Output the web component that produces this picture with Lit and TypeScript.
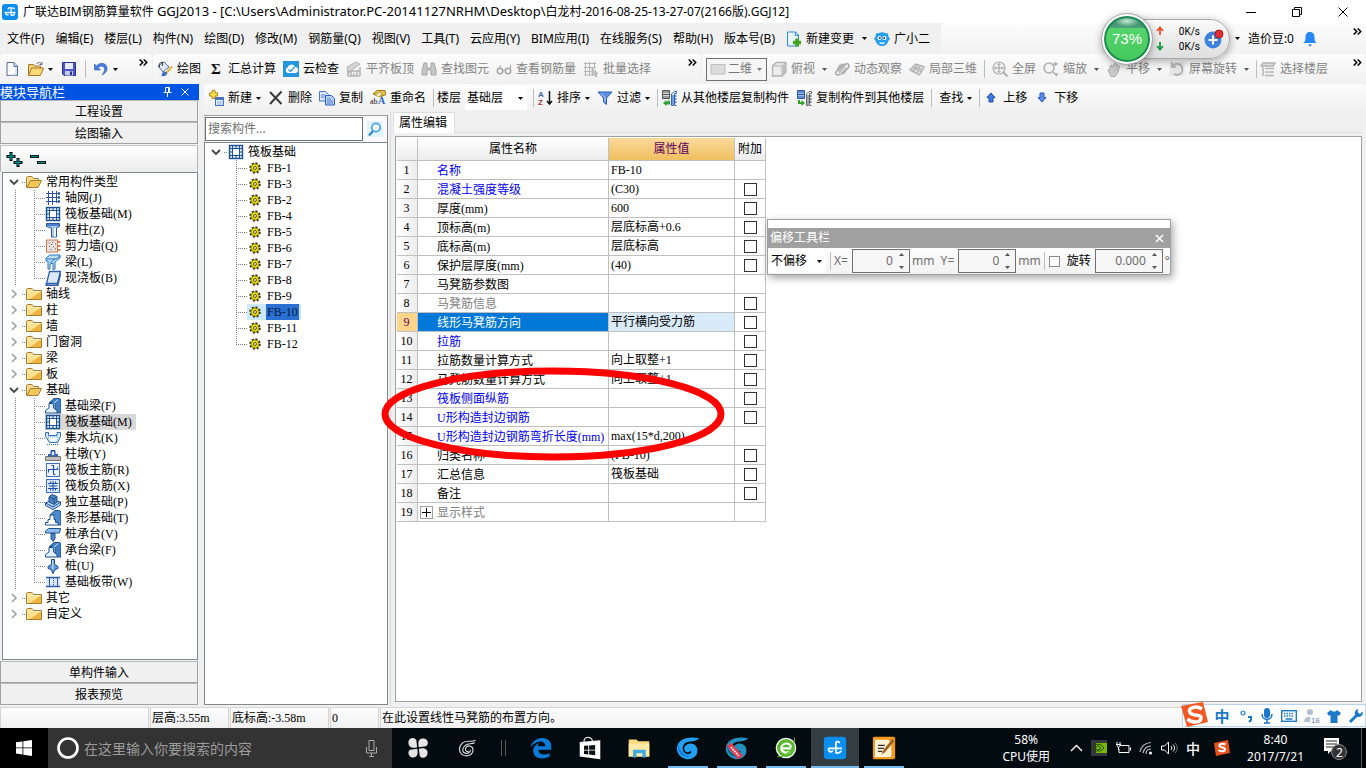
import { LitElement, html, css, svg, nothing } from "lit";
import { customElement } from "lit/decorators.js";
import { classMap } from "lit/directives/class-map.js";

const g = "#b4b4b4";

const icons: Record<string, unknown> = {
  app: svg`<rect x="0" y="0" width="16" height="16" rx="3" fill="#0d8df0"/><path d="M9 11.500V5.500a1.700 1.700 0 0 1 3.400 0M2.500 8.500h11M3.500 8.500c0 2 1.500 3 3 2M9 11.500c2 0 3.500-.5 3.500-2M9 4c-1.500-1-3 0-3 1.500" fill="none" stroke="#fff" stroke-width="1.300"/>`,
  file: svg`<path d="M3 1.500h7l3.500 3.500v9.500h-10.500z" fill="#fff" stroke="#53699a"/><path d="M10 1.500v4h3.500" fill="#cfdcf2" stroke="#53699a"/><path d="M12 6.500v7.500H5" fill="none" stroke="#b9c6e0"/>`,
  open: svg`<path d="M.5 14V3.500h5l1 1.500h6v2" fill="#f4d27a" stroke="#a8782a"/><path d="M.5 14.500l3-7.500h12l-3 7.500z" fill="#fbd976" stroke="#a8782a"/><path d="M8.500 3c2-2.500 4.500-1.500 5.500.500m0 0V1m0 2.500h-2.500" fill="none" stroke="#668" />`,
  save: svg`<path d="M1.500 1.500h13v13h-11.500l-1.500-1.500z" fill="#4b57c8" stroke="#2b3590"/><rect x="4" y="2" width="8" height="6" fill="#e8ecff"/><rect x="4" y="10" width="8" height="4.500" fill="#c7c9de"/><rect x="9" y="10.500" width="2" height="3.500" fill="#2b3590"/>`,
  undo: svg`<path d="M1.500 3v6h6L5.200 6.800C8 4 11.500 5 11.500 8c0 2.500-1 4-2.500 6 4-2 5.500-4.500 5-7.500C13 1.500 6.500 1 3.500 5z" fill="#4c7fdc" stroke="#2b58b0" stroke-width=".6"/>`,
  paint: svg`<path d="M1 5l6-4 5 5-6 5z" fill="#dfe7f7" stroke="#54699a"/><path d="M2.500 6V2.500l3-1.500v4" fill="none" stroke="#444"/><path d="M15 5.500l-6 7" stroke="#e5b43a" stroke-width="2"/><path d="M5 12c2-1 3-2 5 0 0 3-3 3.500-6 3 1-.5 1-1.500 1-3z" fill="#3c6fc8"/>`,
  sigma: svg`<text x="3" y="13" font-family="Liberation Serif" font-weight="bold" font-size="15" fill="#111">Σ</text>`,
  cloud: svg`<rect width="16" height="16" fill="#2496e0"/><path d="M4.500 12a3 3 0 0 1 0-5.500A4 4 0 0 1 12 6a3 3 0 0 1 0 6z" fill="#fff"/><path d="M5.500 8.500l2 2 4-4.500" fill="none" stroke="#2496e0" stroke-width="1.300"/>`,
  slab: svg`<path d="M1 6l9-5 4 2-8 6v2l-4 1z" fill="#d4d4d4" stroke="${g}"/><path d="M2 15V10h12V6M5 15v-3M8 15v-3M11 15v-5M14 15V8M2 15h12" fill="none" stroke="${g}" stroke-width="1.500"/>`,
  find: svg`<path d="M3 2h3v5h4V2h3l2 7v5h-5V9H6v5H1V9z" fill="#c6c6c6" stroke="#a6a6a6"/>`,
  glasses: svg`<circle cx="4" cy="10" r="2.700" fill="none" stroke="#a6a6a6" stroke-width="1.500"/><circle cx="12" cy="10" r="2.700" fill="none" stroke="#a6a6a6" stroke-width="1.500"/><path d="M6.500 9.500h3M1.500 9L5 4M14.500 9V3.500" stroke="#a6a6a6" fill="none"/>`,
  batch: svg`<path d="M1 2.500h12M1 6.500h12M1 10.500h7M1 14h7M2.500 1v13M6.500 1v13M11.500 1v6" stroke="${g}" fill="none"/><path d="M9 7v8l2-2 1.500 3 1.500-.5-1.500-3H15z" fill="#c8c8c8" stroke="#a0a0a0" stroke-width=".7"/>`,
  rect: svg`<rect x="1" y="3.500" width="14" height="9.500" fill="#dcdcdc" stroke="#c0c0c0"/>`,
  cube: svg`<path d="M1.500 5l4-3.500h9.500v9.500l-4 4h-9.500z" fill="#ececec" stroke="#b2b2b2" stroke-width="1.300"/><path d="M1.500 5h9.500v10M11 5l4-3.500" fill="none" stroke="#b2b2b2"/><path d="M11.500 5.500l3-3v8.500l-3 3z" fill="#bdbdbd"/>`,
  orbit: svg`<ellipse cx="8" cy="8" rx="4.500" ry="5.500" fill="#bdbdbd"/><ellipse cx="8" cy="8.500" rx="8" ry="3" transform="rotate(-38 8 8)" fill="none" stroke="#a9a9a9" stroke-width="1.400"/><path d="M6 13l7-9" stroke="#eee"/>`,
  part3d: svg`<path d="M.8 9l6-6 8.500 3-5 8z" fill="#e0e0e0" stroke="#adadad" stroke-width="1.200"/><path d="M4 6l8.500 5M8 4L4.500 11.500M11 5l-3.500 8M3 10l4-4 6 3" fill="none" stroke="#adadad"/>`,
  full: svg`<circle cx="7" cy="7" r="6" fill="#f4f4f4" stroke="#b0b0b0" stroke-width="1.200"/><path d="M7 2.500v9M2.500 7h9M5.500 4L7 2.500 8.500 4M5.500 10L7 11.500 8.500 10M4 5.500L2.500 7 4 8.500M10 5.500L11.500 7 10 8.500" fill="none" stroke="#a0a0a0"/><path d="M11.500 11.500l4 4" stroke="#b0b0b0" stroke-width="2"/>`,
  zoom: svg`<circle cx="6" cy="7" r="5" fill="#f4f4f4" stroke="#b0b0b0" stroke-width="1.500"/><path d="M10 11l4 4M10 3h5M12.500 1v4M11 13h4" stroke="#b0b0b0" stroke-width="1.500"/>`,
  hand: svg`<path d="M2 9l2-1V5l2-1v2l3-4 1.500 1.500 3 2-1.500 6-3 4H5z" fill="#c9c9c9" stroke="#ababab"/>`,
  rotate: svg`<rect x=".5" y="1" width="15" height="14" fill="#e6e6e6"/><path d="M3 6a5.500 5.500 0 1 1 2 7M3 1.500V6h4" fill="none" stroke="#aaa" stroke-width="1.600"/>`,
  floors: svg`<path d="M3 2h12l-2 3H1zM5 7.500h9M5 11h9M5 14.500h9M3 6v9" fill="#ddd" stroke="${g}" stroke-width="1.500"/>`,
  create: svg`<path d="M4 .5h3v2.500h2.500v3H7v2.500H4V6H1.500V3H4z" fill="#ffe14a" stroke="#b48a12"/><rect x="7.500" y="7.500" width="8" height="8" fill="#e5eefb" stroke="#4874bd"/><path d="M8 9h7" stroke="#4874bd" stroke-width="2"/><path d="M9 12h5.500M9 14h5.500" stroke="#8faee0"/>`,
  remove: svg`<path d="M2 2l11.500 12M13.500 1.500L2 14" stroke="#3a3a3a" stroke-width="2" fill="none"/>`,
  copy: svg`<path d="M.5 1.500h6l3 3V11H.5z" fill="#d7e5fb" stroke="#4b76c4"/><path d="M6.500 5.500h6l3 3V15h-9z" fill="#b5cef5" stroke="#2e5fb5"/><path d="M8 9h4M8 11h6M8 13h6M2 5h4M2 7h4" stroke="#5c83c9"/>`,
  rename: svg`<path d="M3 4l4-3.500h8l1 4-5 2z" fill="#e5bf46" stroke="#9a761f"/><path d="M5 5l5-3 2 2-3 3z" fill="#fff0c0" stroke="#9a761f" stroke-width=".6"/><text x="0" y="14" font-family="Liberation Serif" font-size="8" fill="#111">ab</text><text x="8" y="14" font-family="Liberation Serif" font-weight="bold" font-size="10" fill="#2d62bd">A</text>`,
  sort: svg`<text x="1" y="7" font-family="Liberation Sans" font-weight="bold" font-size="8" fill="#3c68ae">A</text><text x="1" y="15" font-family="Liberation Sans" font-weight="bold" font-size="8" fill="#a9393d">Z</text><path d="M12.500 1v13M10 11l2.500 3 2.500-3" fill="none" stroke="#111" stroke-width="1.500"/>`,
  filter: svg`<path d="M1 2h14l-5.500 6v6.500L6.500 12V8z" fill="#5b8fe8" stroke="#2c5cb5"/><path d="M4 3.500l4 4v4" stroke="#c4dafa" fill="none"/>`,
  copyFrom: svg`<path d="M1.500.500h7v8h-7z" fill="#ddd" stroke="#555"/><path d="M2 2h6M2 4.500h6M2 7h6" stroke="#555"/><path d="M10.500 4l3-2.500h2v2h-2v12h2M10.500 4v11.500h2" stroke="#2f66bd" fill="none"/><path d="M11 5h2v10h-2z" fill="#6f9ee6"/><path d="M13.500 6h2M13.500 9h2M13.500 12h2" stroke="#2f66bd" stroke-width="1.500"/><path d="M9 11v3.500H5.500V16L2 13l3.500-3v1.500H7V10z" fill="#2fa22f"/>`,
  copyTo: svg`<path d="M1.500.500h7v8h-7z" fill="#9dbcf0" stroke="#2c5aa8"/><path d="M2 2h6M2 4.500h6M2 7h6" stroke="#2c5aa8"/><path d="M10.500 4l3-2.500h2v2h-2v12h2M10.500 4v11.500h2" stroke="#666" fill="none"/><path d="M11 5h2v10h-2z" fill="#a0a8b4"/><path d="M13.500 6h2M13.500 9h2M13.500 12h2" stroke="#555" stroke-width="1.500"/><path d="M2 10v4h3.500v2L9 13 5.500 10v2H4v-2z" fill="#2fa22f"/>`,
  up: svg`<path d="M8 3l4 4.500H10v4.500H6V7.500H4z" fill="#3f79e6" stroke="#1e4ca8"/>`,
  down: svg`<path d="M8 12L4 7.500h2V3h4v4.500h2z" fill="#5d8cee" stroke="#2b59b8"/>`,
  change: svg`<path d="M1.500 1h8l3 3v11h-11z" fill="#eaf5fd" stroke="#2a8fd0"/><path d="M9.500 1v3.500h3" fill="none" stroke="#2a8fd0"/><path d="M11 7.500v8M7 11.500h8" stroke="#44a51c" stroke-width="3.500"/>`,
  owl: svg`<path d="M2 2.500l3-.5c2-1 4-1 6 0l3 .5.500 3.500c2 1 1.500 3 0 3.500-1 4-3.500 5.500-6.500 5.500s-5.500-1.500-6.500-5.500c-1.500-.5-2-2.500 0-3.500z" fill="#269ee8"/><circle cx="5.500" cy="7" r="2" fill="#fff"/><circle cx="10.500" cy="7" r="2" fill="#fff"/><circle cx="5.800" cy="7" r=".9" fill="#135"/><circle cx="10.200" cy="7" r=".9" fill="#135"/><path d="M5.500 11.500c1.500 1 3.500 1 5 0" stroke="#fff" stroke-width="1.300" fill="none"/>`,
  bell: svg`<path d="M8 1c3.500 0 4.500 2.500 4.500 5.500 0 3 .5 4 2 5.500h-13c1.500-1.500 2-2.500 2-5.500C3.500 3.500 4.500 1 8 1z" fill="#2489f4"/><path d="M6 13.500h4L8 15.500z" fill="#1868c8"/>`,
  folder: svg`<path d="M.5 13.500V3.500l1-1h4.500l1.500 2h8v9z" fill="#fadf8e" stroke="#a77c35"/><path d="M15 5.500v7.500H4z" fill="#eeb53e"/><path d="M1.500 5.500h13" stroke="#fff3c4"/>`,
  folderOpen: svg`<path d="M.5 13.500V3.500l1-1h4.500l1.500 2h5v2" fill="#fadf8e" stroke="#a77c35"/><path d="M1 13.500l3.500-7h11l-3.500 7z" fill="#f5c858" stroke="#a77c35"/>`,
  axis: svg`<path d="M3.500 1v14M7.500 1v14M11.500 1v12M1 3.500h12M1 7.500h12M1 11.500h12" stroke="#2b56a8"/><path d="M13 3.500h2M13 7.500h2M13 11.500h2" stroke="#2b56a8" stroke-width="2.500"/>`,
  raft: svg`<rect x="1.500" y="1.500" width="13" height="13" fill="#e2effc" stroke="#1c4f8f" stroke-width="1.400"/><rect x="4.500" y="4.500" width="7" height="7" fill="#fff" stroke="#1c4f8f"/><path d="M4.500 2v2M8 2v2M11.500 2v2M4.500 12v2M8 12v2M11.500 12v2M2 4.500h2M2 8h2M2 11.500h2M12 4.500h2M12 8h2M12 11.500h2" stroke="#1c4f8f"/>`,
  column: svg`<path d="M1.500 1.500h13v3l-3 1.500v9h-5V6l-5-1.500z" fill="#a9c9f4" stroke="#2a559c"/><path d="M2 2h12v2H2z" fill="#4a7fd0"/><path d="M10 6v9" stroke="#fff" stroke-width="1.500"/>`,
  wall: svg`<rect x="1.500" y="2" width="11" height="12" fill="#e9e4e2" stroke="#cc7a4a"/><path d="M3.500 5h1M7 4.500h1M10 6h1M4 8.500h1M8 9h1M5.500 11.500h1M10 11h1M6 6.500h1" stroke="#555" stroke-width="1.200"/><path d="M13 4h2.500M13 8h2.500M13 12h2.500" stroke="#cc5c20" stroke-width="1.500"/>`,
  beam: svg`<path d="M1 4l4-3h10v3l-5 4v7l-2 1V9l-3 1v5H3V7H1z" fill="#b9e0f8" stroke="#2f74b8"/><path d="M2 5h9l4-3M5 9l5-4" stroke="#2f74b8" fill="none"/>`,
  castSlab: svg`<path d="M4.500 1.500h11l-3 12H1.500z" fill="#dbe9fb" stroke="#2d60ae" stroke-width="1.300"/><path d="M1.500 13v2.500H12.500l3-12" fill="none" stroke="#2d60ae" stroke-width="1.800"/>`,
  fbeam: svg`<path d="M4 5l5-4.500h5.500L16 2v13h-4l-2-3V5z" fill="#3f7fc4" stroke="#1f4f8c"/><path d="M4 5.500h4.500V10L12 12.500V15H.5v-2.500L4 10z" fill="#e3f0fd" stroke="#1f4f8c"/><path d="M8.500 5.500L13 1.500" stroke="#cfe5fa"/>`,
  pit: svg`<path d="M.5 2.500h3v3h8.500v-3h3.500v4l-3 6h-8l-4-6z" fill="#d5e8fb" stroke="#2f6fb8"/><path d="M3 7h10v1l-2 4H5z" fill="#fff" stroke="#72aee0" stroke-dasharray="1 1"/><path d="M2 14.500h12" stroke="#2f6fb8" stroke-dasharray="1 1"/>`,
  pier: svg`<path d="M.5 10.500h15v4H.5z" fill="#bdbdbd" stroke="#777"/><path d="M3.500 10V8.500h2.500V4.500h4v4h2.500V10z" fill="#5c92dc" stroke="#284f94"/><path d="M7 6h2v3H7z" fill="#e5f0ff"/>`,
  mainBar: svg`<rect x="1.500" y="1.500" width="13" height="13" fill="#f2f7ff" stroke="#3c6fc0"/><path d="M3.500 10.500v-3h9v-2M8.500 12.500v-9h-2M8.500 12.500h2" fill="none" stroke="#2350a8" stroke-width="1.200"/>`,
  negBar: svg`<rect x="1.500" y="1.500" width="13" height="13" fill="#dce8fa" stroke="#3c6fc0"/><path d="M3 5.500h10M3 10.500h10M5.500 3.500v2M10.500 3.500v2M8 3v10M4 8h8M5.500 10.500v2M10.500 10.500v2" fill="none" stroke="#2350a8"/>`,
  iso: svg`<path d="M.5 9l5.500-3 9.500 2v3l-7.500 4.500-7.500-4z" fill="#b4d5f5" stroke="#1f4f8c"/><path d="M4 3l3-2.500 5 2v5.500l-3 2.500-5-2.500z" fill="#4e86c4" stroke="#1f4f8c"/><path d="M4 3l5 2v5M9 5l3-2.500M.5 9l7.500 4 7.500-5" fill="none" stroke="#1f4f8c"/>`,
  strip: svg`<path d="M5 5l5-4.500h4.500L16 2v13h-3" fill="#4d8bd0" stroke="#1f4f8c"/><path d="M.5 15v-2.500H3V9.500h2V5h4v4.500h1.500v3H13V15z" fill="#fff" stroke="#1f4f8c"/>`,
  cap: svg`<path d="M.5 5l3-2.500h12l-1 4.500H.5z" fill="#8fbdee" stroke="#1f4f8c"/><path d="M6 7.500h4v5L8 15.500 6 12.500z" fill="#4e86c4" stroke="#1f4f8c"/>`,
  pile: svg`<path d="M6.500 1.500h3v5l3.500 2v2l-3 1L8 15.500 6 11.500l-3-1v-2l3.500-2z" fill="#5d9bde" stroke="#1c4a86"/><path d="M7.800 2v9" stroke="#dfefff"/>`,
  band: svg`<path d="M1 4h14v8H1z" fill="#dbe9fb"/><path d="M1 3.500h14M1 12.500h14" stroke="#2c5cab" stroke-width="1.400"/><path d="M4.500 4v8M12.500 4v8" stroke="#2c5cab"/><path d="M8.500 4v8" stroke="#2c5cab" stroke-dasharray="1 1"/>`,
  gear: svg`<circle cx="8" cy="8" r="6.500" fill="none" stroke="#3b3400" stroke-width="2.500" stroke-dasharray="2.550 2.550"/><circle cx="8" cy="8" r="5.500" fill="#f3e400" stroke="#3b3400"/><circle cx="8" cy="8" r="2" fill="#fffbd0" stroke="#3b3400" stroke-width="1.200"/>`,
  search: svg`<rect width="16" height="16" fill="#e3f3fd"/><circle cx="9" cy="6.500" r="4.200" fill="#f6fcff" stroke="#45a5e5" stroke-width="1.800"/><path d="M6 10l-4 4.500" stroke="#2d86cc" stroke-width="2.200"/>`,
};

const icon = (name: string, size = 16) =>
  html`<svg class="ic" width=${size} height=${size} viewBox="0 0 16 16" aria-hidden="true">${icons[name]}</svg>`;

const caret = () =>
  html`<svg class="caret" width="5" height="3" viewBox="0 0 5 3" aria-hidden="true"><path d="M0 0h5L2.500 3z" fill="currentColor" /></svg>`;

const more = () =>
  html`<button class="more" aria-label="更多"><svg width="9" height="7" viewBox="0 0 9 7"><path d="M.7.500l3 3-3 3M4.700.500l3 3-3 3" fill="none" stroke="#000" stroke-width="1.500" /></svg></button>`;

interface Tool { icon: string; label: string; menu?: boolean; }

const tool = (t: Tool, off = false) =>
  html`<button class=${classMap({ tool: true, off })}>${icon(t.icon)}<span>${t.label}</span>${t.menu ? caret() : nothing}</button>`;

const menus = ["文件(F)", "编辑(E)", "楼层(L)", "构件(N)", "绘图(D)", "修改(M)", "钢筋量(Q)", "视图(V)", "工具(T)", "云应用(Y)", "BIM应用(I)", "在线服务(S)", "帮助(H)", "版本号(B)"];

interface Branch { label: string; open?: boolean; items?: [string, string][]; }

const branches: Branch[] = [
  { label: "常用构件类型", open: true, items: [["axis", "轴网(J)"], ["raft", "筏板基础(M)"], ["column", "框柱(Z)"], ["wall", "剪力墙(Q)"], ["beam", "梁(L)"], ["castSlab", "现浇板(B)"]] },
  { label: "轴线" }, { label: "柱" }, { label: "墙" }, { label: "门窗洞" }, { label: "梁" }, { label: "板" },
  { label: "基础", open: true, items: [["fbeam", "基础梁(F)"], ["raft", "筏板基础(M)"], ["pit", "集水坑(K)"], ["pier", "柱墩(Y)"], ["mainBar", "筏板主筋(R)"], ["negBar", "筏板负筋(X)"], ["iso", "独立基础(P)"], ["strip", "条形基础(T)"], ["cap", "桩承台(V)"], ["fbeam", "承台梁(F)"], ["pile", "桩(U)"], ["band", "基础板带(W)"]] },
  { label: "其它" }, { label: "自定义" },
];

const members = ["FB-1", "FB-3", "FB-2", "FB-4", "FB-5", "FB-6", "FB-7", "FB-8", "FB-9", "FB-10", "FB-11", "FB-12"];

interface Prop { name: string; value?: string; tone?: string; box?: boolean; }

const props: Prop[] = [
  { name: "名称", value: "FB-10", tone: "key" },
  { name: "混凝土强度等级", value: "(C30)", tone: "key", box: true },
  { name: "厚度(mm)", value: "600", box: true },
  { name: "顶标高(m)", value: "层底标高+0.6", box: true },
  { name: "底标高(m)", value: "层底标高", box: true },
  { name: "保护层厚度(mm)", value: "(40)", box: true },
  { name: "马凳筋参数图" },
  { name: "马凳筋信息", tone: "dim", box: true },
  { name: "线形马凳筋方向", value: "平行横向受力筋", tone: "sel", box: true },
  { name: "拉筋", tone: "key", box: true },
  { name: "拉筋数量计算方式", value: "向上取整+1", box: true },
  { name: "马凳筋数量计算方式", value: "向上取整+1", box: true },
  { name: "筏板侧面纵筋", tone: "key", box: true },
  { name: "U形构造封边钢筋", tone: "key", box: true },
  { name: "U形构造封边钢筋弯折长度(mm)", value: "max(15*d,200)", tone: "key" },
  { name: "归类名称", value: "(FB-10)", box: true },
  { name: "汇总信息", value: "筏板基础", box: true },
  { name: "备注", box: true },
  { name: "显示样式", tone: "dim tree" },
];

const chevron = (open: boolean) => html`<svg class="chev" width="10" height="10" viewBox="0 0 10 10" aria-hidden="true">
  ${open ? svg`<path d="M1 3l4 4 4-4" fill="none" stroke="#444" stroke-width="1.800"/>` : svg`<path d="M3 1l4 4-4 4" fill="none" stroke="#a0a0a0" stroke-width="1.600"/>`}</svg>`;

const swirl = (color: string, shade: string) => svg`<path d="M27 2c-3 1-6-1-11 0C7 2 1 8 1 15c0 6 5 11 11 12 7 1 13-3 13-10 0-5-4-9-10-8-5 1-7 6-4 9 2 2 5 1 6-1 2 3-1 5-4 4-6-1-7-9-2-13C15 5 24 8 27 2z" fill=${color}/><path d="M3 10c-2 10 6 16 14 14-8-1-13-6-14-14z" fill=${shade}/>`;

const apps: { name: string; state?: string; art: unknown }[] = [
  { name: "启动器", art: svg`<g fill="#e6e6e6"><path d="M13 13C6 15 2 12 3 6c1-4 7-5 9-1z"/><path d="M15 13C13 6 16 2 21 3c5 1 6 7 2 9z"/><path d="M15 15c7-2 11 1 10 6-1 5-7 6-9 2z"/><path d="M13 15c2 7-1 11-6 10-4-1-6-7-2-9z"/></g>` },
  { name: "搜索助手", art: svg`<path d="M24 5c-5 3-10-1-15 3-5 4-5 11 0 14 5 3 12 0 12-6 0-4-5-6-8-3-2 3 0 6 3 5M23 8c-4 2-8 0-11 3-4 3-4 8 0 9 3 1 6-1 6-4" fill="none" stroke="#ddd" stroke-width="1.300"/>` },
  { name: "divider", art: nothing },
  { name: "Edge", art: svg`<path d="M2 13C5-1 26-1 26 12v4H11c0 6 8 7 13 4v4C17 28 4 27 5 16c.5-4 4-7 8-8-2 1-3 3-3 4h9c0-8-11-7-17 1z" fill="#0a7bd8"/>` },
  { name: "应用商店", art: svg`<path d="M2 7l24-2v22l-24-3z" fill="#fff"/><path d="M7 7c0-7 8-7 10-1" fill="none" stroke="#ddd" stroke-width="1.500"/><path d="M7 11.500l5-.5v5H7zM13 11l7-.5V16h-7zM7 17h5v4.500L7 21zM13 17h7v5.500l-7-.8z" fill="#0a1014"/>` },
  { name: "文件资源管理器", art: svg`<path d="M2 4h9l2 2h13v18H2z" fill="#fbd97b"/><path d="M2 9h24v15H2z" fill="#fde9a6"/><path d="M7 25v-9h15v9h-4v-5h-7v5z" fill="#3fa9e6"/>` },
  { name: "广联达", state: "run", art: swirl("#1fa0f0", "#1678d4") },
  { name: "广联达服务", state: "run", art: svg`${swirl("#2391c0", "#135f8a")}<path d="M2 12l5-4 14 15-6 4z" fill="#e33a4a"/><path d="M7 13l9 10" stroke="#fff" stroke-width="2" stroke-dasharray="2 1"/>` },
  { name: "浏览器", state: "run", art: svg`<circle cx="14" cy="14" r="12" fill="#fff"/><circle cx="14" cy="14" r="10.500" fill="#57b82e"/><path d="M8 14.500h12c0-8-11-7-11.500-.5 0 6 7 6.500 10 3.500" fill="none" stroke="#fff" stroke-width="2.500"/><path d="M4 24c9 2 20-9 20-22" fill="none" stroke="#57b82e" stroke-width="1.200"/>` },
  { name: "钢筋算量", state: "run on", art: svg`<rect x="1" y="1" width="26" height="26" rx="4" fill="#0a8ff0"/><path d="M15 20V8.500c0-2.500 4-2.500 4 0M6.500 14.500H22M6.500 14.500c-.5 4 3 5 5 2.500M15 20c3 0 6-1 6-3" fill="none" stroke="#fff" stroke-width="2"/>` },
  { name: "文档编辑", state: "run", art: svg`<rect x="1" y="1" width="26" height="26" rx="2" fill="#f39a1c"/><path d="M4 5h15l3 3v16H4z" fill="#fdf3d4" stroke="#fff"/><path d="M7 11h8M7 14.500h7M7 18h5" stroke="#333" stroke-width="1.300"/><path d="M24 3L13 17l-2 5 4-3L26 6z" fill="#a55b1a"/>` },
];

@customElement("app-root")
export class AppRoot extends LitElement {
  static styles = css`
    :host {
      display: flex; flex-direction: column; position: relative; min-height: 100vh; overflow: hidden;
      background: #f0f0f0; color: #000;
      font: 12px/16px "Noto Sans", "Noto Sans CJK SC", sans-serif;
    }
    * { box-sizing: border-box; }
    button, input, select { font: inherit; color: inherit; margin: 0; padding: 0; border: 0; background: none; border-radius: 0; outline: 0; white-space: nowrap; }
    ul { list-style: none; margin: 0; padding: 0; }
    svg { display: block; flex: none; }
    .titlebar { display: flex; align-items: center; height: 23px; background: #fff; padding-left: 2px; gap: 5px; }
    .titlebar h1 { flex: 1; margin: 0; font-size: 12px; font-weight: 400; white-space: nowrap; }
    .path { font-size: 13px; }
    .titlebar button { width: 46px; display: grid; place-items: center; }
    .wins { display: flex; }
    .menubar { display: flex; align-items: center; height: 31px; padding-left: 7px; gap: 11px; }
    .extras { display: flex; align-items: center; gap: 7px; }
    .menuright { flex: 1; align-self: stretch; display: flex; align-items: center; justify-content: flex-end; background: linear-gradient(#fcfcfc, #f2f2f2); border-radius: 4px 0 0 0; gap: 8px; padding-right: 4px; }
    .menuright .more { margin-left: 27px; }
    .menubar .tool { margin: 0; }
    .menubar .tool .caret { margin-left: 4px; }
    .row2 { display: grid; grid-template-columns: 152px 548px 1fr; gap: 1px; height: 30px; }
    .group { display: flex; align-items: center; background: linear-gradient(#fcfcfc, #f0f0f0); border-radius: 4px; padding: 0 4px; min-width: 0; }
    .tool { display: flex; align-items: center; gap: 4px; margin-right: 7px; flex: none; }
    .off { color: #838383; }
    .off .caret { color: #555; }
    .views .tool .caret { margin-left: 3px; }
    .sep { width: 1px; height: 18px; background: #bdbdbd; margin-right: 3px; flex: none; }
    .wide { margin-right: 7px; }
    .more { margin-left: auto; align-self: flex-start; padding: 5px 0; display: block; }
    .quick .tool { margin-right: 8px; }
    .combo { display: flex; align-items: center; position: relative; flex: none; }
    .combo select { appearance: none; }
    .combo .caret { position: absolute; right: 4px; pointer-events: none; }
    .view { border: 1px solid #707070; height: 23px; width: 61px; padding-left: 3px; margin-right: 4px; gap: 2px; color: #777; background: #f5f5f5; }
    .view select { width: 38px; }
    .floor { margin-right: 6px; background: #fff; height: 24px; }
    .floor select { width: 62px; padding-left: 2px; }
    .label { margin-right: 4px; }
    .main { flex: 1; display: flex; }
    .nav { width: 199px; display: flex; flex-direction: column; padding-bottom: 1px; }
    .navhead { height: 16px; background: #0054e3; color: #fff; display: flex; align-items: center; font-size: 13px; gap: 8px; }
    .navhead span { flex: 1; }
    .navhead button { width: 10px; }
    .stackbtn { width: 198px; height: 22px; background: #f0f0f0; border: 1px solid #a2a2a2; border-top-color: #b9b9b9; padding-top: 2px; flex: none; }
    .navtools { width: 198px; height: 27px; border: 1px solid #b5b5b5; border-bottom: 0; border-top-color: #c8c8c8; margin-top: 1px; display: flex; align-items: center; padding-left: 5px; gap: 7px; background: linear-gradient(#fff, #ececec); }
    .tree { background: #fff; border: 1px solid #828790; font-family: "Liberation Serif", "Noto Sans CJK SC", serif; line-height: 16px; }
    .nav .tree { flex: 1; width: 196px; margin-left: 2px; margin-bottom: 1px; padding-top: 1px; }
    .branch { display: flex; align-items: center; height: 16px; padding-left: 6px; }
    .branch .ic { margin-right: 4px; }
    .dots { width: 4px; height: 1px; margin-left: 3px; background: repeating-linear-gradient(90deg, #808080 0 1px, transparent 1px 2px); }
    .kids { padding-left: 31px; background: repeating-linear-gradient(#808080 0 1px, transparent 1px 2px) 12px 0 / 1px 100% no-repeat; }
    .kid { display: flex; height: 16px; align-items: center; }
    .guide { width: 11px; height: 16px; background: repeating-linear-gradient(90deg, #808080 0 1px, transparent 1px 2px) 0 8px / 11px 1px no-repeat, repeating-linear-gradient(#808080 0 1px, transparent 1px 2px) 0 0 / 1px 16px no-repeat; }
    .kid:last-child .guide { background-size: 11px 1px, 1px 8px; }
    .leaf { display: flex; align-items: center; gap: 4px; height: 16px; padding-right: 4px; }
    .leaf.on { background: #d9d9d9; }
    .mid { width: 184px; margin-left: 5px; padding-top: 3px; display: flex; flex-direction: column; }
    .find { display: flex; align-items: center; height: 27px; border: 1px solid #a0a0a0; border-bottom: 0; border-left-color: #d0d0d0; border-right-color: #828790; background: #fafafa; }
    .find input { width: 158px; height: 24px; border: 1px solid #707070; background: #fff; padding: 0 0 2px 2px; margin-right: 4px; }
    .find input::placeholder { color: #707070; opacity: 1; }
    .mid .tree { flex: 1; padding-top: 1px; margin-bottom: 1px; }
    .mid .kids { background: none; }
    .mid .leaf { padding: 0; gap: 0; }
    .mid .leaf .ic { margin: 0 5px 0 2px; }
    .mid .leaf span { padding: 0 1px; }
    .mid .leaf.on { background: #cce8ff; padding-right: 2px; }
    .mid .leaf.on span { background: #2a6fd2; color: #001a3a; }
    .work { flex: 1; display: flex; flex-direction: column; min-width: 0; }
    .split { display: flex; flex: 1; }
    .row3 { display: flex; align-items: center; height: 28px; margin-left: 5px; padding-left: 4px; background: linear-gradient(#fcfcfc, #f0f0f0); border-radius: 4px; }
    .editor { flex: 1; margin-left: 2px; display: flex; flex-direction: column; border-left: 1px solid #d8d8d8; padding: 0 4px 2px 2px; }
    .tabs { display: flex; height: 21px; }
    .tab { background: #fff; border: 1px solid #dcdcdc; border-bottom: 0; padding: 0 7px 0 5px; height: 21px; }
    .rest { flex: 1; border-bottom: 1px solid #dcdcdc; }
    .sheet { flex: 1; margin: 3px 0 2px 2px; border: 1px solid #a0a0a0; background: #fff; padding: 1px 0 0 1px; }
    .grid { position: relative; width: 369px; }
    table { border-collapse: separate; border-spacing: 0; table-layout: fixed; width: 369px; font-family: "Liberation Serif", "Noto Sans CJK SC", serif; line-height: 16px; }
    th, td { border-right: 1px solid #c0c0c0; border-bottom: 1px solid #c0c0c0; padding: 0; font-weight: 400; white-space: nowrap; height: 19px; }
    thead th { height: 23px; background: linear-gradient(#fff, #ececec); }
    thead .hot { background: linear-gradient(#fbd99b, #f0c060); color: #600060; }
    .c0 { width: 21px; } .c1 { width: 191px; } .c2 { width: 126px; } .c3 { width: 31px; }
    tbody th { background: linear-gradient(90deg, #fff, #ececec); padding-right: 1px; }
    .name { padding-left: 19px; padding-top: 1px; }
    .value { padding-left: 2px; }
    .key .name { color: #0000f0; }
    .dim .name { color: #808080; }
    .sel .name { background: #0078d7; color: #fff; }
    .sel .value { background: #d9eaf9; }
    .sel th { background: #ffd58a; color: #600060; }
    .tree-cell { display: flex; align-items: center; gap: 4px; margin-left: -17px; }
    .plus { width: 13px; height: 13px; border: 1px solid #a0a0a0; background: #fff; display: grid; place-items: center; }
    input[type="checkbox"] { appearance: none; width: 13px; height: 13px; border: 1px solid #333; background: #fff; display: block; margin: 0 auto; }
    .mark { position: absolute; left: -17px; top: 229px; pointer-events: none; }
    .float { position: absolute; left: 767px; top: 219px; width: 404px; border: 1px solid #a0a0a0; background: #fff; padding-top: 8px; box-shadow: 2px 3px 8px rgba(0, 0, 0, 0.35); }
    .floathead { display: flex; align-items: center; justify-content: space-between; height: 20px; padding: 0 6px 0 2px; background: #a0a0a0; color: #fff; }
    .floatbody { display: flex; align-items: center; height: 26px; background: linear-gradient(#fdfdfd, #f2f2f2); color: #6d6d6d; white-space: nowrap; }
    .offset { color: #000; background: #fff; height: 24px; margin-right: 4px; }
    .offset select { width: 58px; padding-left: 3px; }
    .spin { display: flex; align-items: center; border: 1px solid #707070; height: 24px; width: 58px; margin: 0 2px 0 4px; background: #f6f6f6; }
    .spin input { width: 40px; text-align: right; }
    .spin.rot { width: 68px; } .spin.rot input { width: 50px; }
    .arrows { display: flex; flex-direction: column; gap: 10px; margin-left: 6px; }
    .arrows button, .arrows svg { display: block; height: 3px; }
    .floatbody input[type="checkbox"] { width: 11px; height: 11px; border-color: #8a8a8a; margin: 0 7px 0 1px; }
    .turn { color: #000; }
    .ball { position: absolute; left: 1102px; top: 14px; display: flex; align-items: center; }
    .pct { width: 50px; height: 50px; border-radius: 50%; border: 2px solid #fff; outline: 1px solid #aaa; background: radial-gradient(ellipse 14px 6px at 50% 5px, #c4ecd6, transparent), linear-gradient(#1c7a52 0, #4f9f7b 25%, #55d56c 26%, #43c75d 100%); color: #fff; font: 15px/46px "Liberation Sans", sans-serif; text-align: center; box-shadow: inset 0 0 0 2px #1c8a50, 0 2px 8px rgba(0, 0, 0, 0.4); z-index: 1; }
    .pill { width: 98px; height: 40px; margin-left: -20px; padding: 0 5px 0 23px; display: flex; align-items: center; background: linear-gradient(#fafafa, #dedede); border: 1px solid #aaa; border-radius: 0 20px 20px 0; box-shadow: 0 2px 8px rgba(0, 0, 0, 0.35); font: 10px/15px Roboto, sans-serif; text-align: right; }
    .speed { flex: 1; margin-right: 4px; }
    .status { display: grid; grid-template-columns: 149px 79px 99px 49px 1fr; gap: 1px; height: 22px; padding-top: 1px; font-family: "Liberation Serif", "Noto Sans CJK SC", serif; }
    .status span { border: 1px solid #d4d4d4; background: linear-gradient(#fdfdfd, #f0f0f0); padding-left: 1px; line-height: 20px; }
    .ime { position: absolute; right: 0; bottom: 41px; width: 184px; height: 23px; background: #fff; border: 1px solid #b7d3ee; display: flex; align-items: center; gap: 7px; padding-left: 29px; }
    .ime .logo { position: absolute; left: -2px; top: -4px; }
    .mode { width: 20px; text-align: center; font-size: 15px; line-height: 20px; font-weight: 700; color: #1c78c8; }
    .taskbar { display: flex; height: 40px; background: #020b0f; color: #fff; }
    .start { width: 48px; background: #000; display: grid; place-items: center; }
    .ask { width: 344px; background: #333; display: flex; align-items: center; padding: 0 14px 0 8px; gap: 4px; }
    .ask input { flex: 1; min-width: 0; font-size: 14px; height: 24px; }
    .ask input::placeholder { color: #9b9b9b; opacity: 1; }
    .apps { display: flex; padding-left: 2px; }
    .app { width: 48px; margin-right: 1px; display: grid; place-items: center; }
    .run { box-shadow: inset 4px 0 #020b0f, inset -4px 0 #020b0f, inset 0 -2px #76b9ed; }
    .on.app { background: #343d42; box-shadow: inset 0 -2px #76b9ed; }
    .line { width: 22px; display: flex; gap: 3px; align-items: center; justify-content: center; margin-right: 3px; }
    .line i { width: 1px; height: 16px; background: #555; }
    .tray { margin-left: auto; display: flex; align-items: center; text-align: center; line-height: 17px; }
    .cpu { margin-right: 20px; }
    .icons { display: flex; align-items: center; gap: 8px; }
    .lang { width: 14px; font-size: 14px; font-weight: 500; }
    .sogou { margin-left: 6px; }
    .clock { margin: 0 18px 0 17px; }
    .notice { margin-right: 12px; }
    .edge { width: 5px; height: 40px; border-left: 1px solid #555; background: #000; }
  `;

  private branch(b: Branch, inBase: boolean) {
    return html`<li>
      <div class="branch">${chevron(!!b.open)}<i class="dots"></i>${icon(b.open ? "folderOpen" : "folder")}<span>${b.label}</span></div>
      ${b.items ? html`<ul class="kids">${b.items.map(([ic, label]) => html`<li class="kid"><i class="guide"></i><span class=${classMap({ leaf: true, on: inBase && ic === "raft" })}>${icon(ic)}<span>${label}</span></span></li>`)}</ul>` : nothing}
    </li>`;
  }

  private spin(label: string, value: string, rot = false) {
    const arrow = (d: string) => html`<button aria-label="调整"><svg width="5" height="3" viewBox="0 0 5 3"><path d=${d} fill="#555" /></svg></button>`;
    return html`<span class=${classMap({ spin: true, rot })}><input type="text" aria-label=${label} .value=${value} /><span class="arrows">${arrow("M0 3h5L2.500 0z")}${arrow("M0 0h5L2.500 3z")}</span></span>`;
  }

  private prop(p: Prop, i: number) {
    return html`<tr class=${p.tone ?? ""}>
      <th scope="row">${i + 1}</th>
      <td class="name">${i === 18 ? html`<span class="tree-cell"><button class="plus" aria-label="展开"><svg width="9" height="9" viewBox="0 0 9 9"><path d="M4.500 0v9M0 4.500h9" stroke="#000" /></svg></button>${p.name}</span>` : p.name}</td>
      <td class="value">${p.value ?? ""}</td>
      <td>${p.box ? html`<input type="checkbox" aria-label=${"附加 " + p.name} />` : nothing}</td>
    </tr>`;
  }

  private toolbars() {
    return html`
      <nav class="menubar">
        ${menus.map((m) => html`<button>${m}</button>`)}
        <div class="extras">${tool({ icon: "change", label: "新建变更", menu: true })}${tool({ icon: "owl", label: "广小二" })}</div>
        <div class="menuright">${caret()}<span>造价豆:0</span>${icon("bell")}${more()}</div>
      </nav>
      <div class="row2">
        <div class="group quick">
          <button class="tool" aria-label="新建">${icon("file")}</button>
          <button class="tool" aria-label="打开">${icon("open")}${caret()}</button>
          <button class="tool" aria-label="保存">${icon("save")}</button>
          <i class="sep wide"></i>
          <button class="tool" aria-label="撤销">${icon("undo")}${caret()}</button>
          ${more()}
        </div>
        <div class="group">
          ${tool({ icon: "paint", label: "绘图" })}${tool({ icon: "sigma", label: "汇总计算" })}${tool({ icon: "cloud", label: "云检查" })}
          ${tool({ icon: "slab", label: "平齐板顶" }, true)}${tool({ icon: "find", label: "查找图元" }, true)}${tool({ icon: "glasses", label: "查看钢筋量" }, true)}${tool({ icon: "batch", label: "批量选择" }, true)}
          ${more()}
        </div>
        <div class="group views">
          <span class="combo view">${icon("rect")}<select aria-label="视图维度"><option>二维</option></select>${caret()}</span>
          ${tool({ icon: "cube", label: "俯视", menu: true }, true)}${tool({ icon: "orbit", label: "动态观察" }, true)}${tool({ icon: "part3d", label: "局部三维" }, true)}
          <i class="sep wide"></i>
          ${tool({ icon: "full", label: "全屏" }, true)}${tool({ icon: "zoom", label: "缩放", menu: true }, true)}${tool({ icon: "hand", label: "平移", menu: true }, true)}${tool({ icon: "rotate", label: "屏幕旋转", menu: true }, true)}
          <i class="sep"></i>
          ${tool({ icon: "floors", label: "选择楼层" }, true)}
          ${more()}
        </div>
      </div>`;
  }

  private navPane() {
    return html`<aside class="nav">
      <div class="navhead"><span>模块导航栏</span>
        <button aria-label="固定"><svg width="9" height="10" viewBox="0 0 9 10"><path d="M2.500.5h4v5h-4zM5.500.5v5M.5 5.500h8M4.500 6v4" fill="none" stroke="#fff" /></svg></button>
        <button aria-label="关闭"><svg width="8" height="8" viewBox="0 0 8 8"><path d="M.5.5l7 7M7.500.5l-7 7" stroke="#fff" /></svg></button>
        <i></i></div>
      <button class="stackbtn">工程设置</button>
      <button class="stackbtn">绘图输入</button>
      <div class="navtools">
        <button aria-label="全部展开"><svg width="17" height="15" viewBox="0 0 17 15"><path d="M5 0v9M.5 4.500h9M12 6v9M7.500 10.500h9" stroke="#000" stroke-width="3" /><path d="M5 1v7M1.500 4.500h7M12 7v7M8.500 10.500h7" stroke="#008f8c" stroke-width="1.500" /></svg></button>
        <button aria-label="全部折叠"><svg width="17" height="15" viewBox="0 0 17 15"><path d="M0 4.500h9M7 10.500h9" stroke="#000" stroke-width="3" /><path d="M1 4.500h7M8 10.500h7" stroke="#008f8c" stroke-width="1.500" /></svg></button>
      </div>
      <ul class="tree">${branches.map((b) => this.branch(b, b.label === "基础"))}</ul>
      <button class="stackbtn">单构件输入</button>
      <button class="stackbtn">报表预览</button>
    </aside>`;
  }

  private taskbar() {
    return html`<footer class="taskbar">
      <button class="start" aria-label="开始"><svg width="16" height="16" viewBox="0 0 16 16"><path d="M0 2.300l6.500-.9v6.100H0zM7.300 1.300L16 0v7.500H7.300zM0 8.300h6.500v6.200L0 13.600zM7.300 8.300H16V16l-8.700-1.300z" fill="#fff" /></svg></button>
      <div class="ask"><svg width="24" height="24" viewBox="0 0 24 24"><circle cx="12" cy="12" r="9.500" fill="none" stroke="#fff" stroke-width="2.600" /></svg>
        <input type="text" aria-label="搜索" placeholder="在这里输入你要搜索的内容" />
        <svg width="13" height="17" viewBox="0 0 13 17"><path d="M4 .5h5v10H4zM1.500 7v6h10V7M6.500 13v3M4 16.500h5" fill="none" stroke="#aaa" /></svg></div>
      <div class="apps">${apps.map((a) => a.name === "divider" ? html`<span class="line"><i></i><i></i></span>` : html`<button class="app ${a.state ?? ""}" aria-label=${a.name}><svg width="24" height="24" viewBox="0 0 28 28">${a.art}</svg></button>`)}</div>
      <div class="tray">
        <div class="cpu">58%<br />CPU使用</div>
        <div class="icons">
          <svg width="13" height="8" viewBox="0 0 13 8"><path d="M1 7l5.500-5.500L12 7" fill="none" stroke="#fff" stroke-width="1.300" /></svg>
          <svg width="16" height="16" viewBox="0 0 16 16"><rect width="16" height="16" fill="#32383b" /><path d="M5 3h11v10H5z" fill="#76b900" /><path d="M1 8c3-5 9-5 12 0-3 4-9 4-12 0zM4 8c2-2.500 4-2.500 6 0-2 2-4 2-6 0z" fill="none" stroke="#224400" /></svg>
          <svg width="16" height="14" viewBox="0 0 16 14"><path d="M5 4.500h9v7H4V8M1 3.500h5M2 1v3c0 3 3 3 3 0V1M3.500 6v3M15.500 6.500v3" fill="none" stroke="#fff" /></svg>
          <svg width="14" height="14" viewBox="0 0 14 14"><path d="M1 11C2 5 6 2 12 1.500M4 12c1-4 4-7 8-7M7 13c0-3 2-5 5-5" fill="none" stroke="#bbb" stroke-width="1.200" /><circle cx="11.500" cy="12" r="1.500" fill="#fff" /></svg>
          <svg width="17" height="14" viewBox="0 0 17 14"><path d="M.5 5h3l4-4v12l-4-4h-3zM10 5c1 1 1 3 0 4M12 3.500c2 2 2 5 0 7" fill="none" stroke="#fff" /><path d="M14 2c3 3 3 7 0 10" fill="none" stroke="#777" /></svg>
          <button class="lang">中</button>
          <button class="sogou" aria-label="输入法"><svg width="16" height="16" viewBox="0 0 16 16"><path d="M0 3l14-3 2 13-14 3z" fill="#e8501e" /><path d="M11.500 4.500c-3-1.500-7-.5-6 1.500s6 1 5.500 3.500-5 2-6.500.5" fill="none" stroke="#fff" stroke-width="2" /></svg></button>
        </div>
        <div class="clock">8:40<br />2017/7/21</div>
        <svg class="notice" width="27" height="25" viewBox="0 0 27 25"><path d="M2 2h15v13H9l-3 3v-3H2z" fill="#fff" /><path d="M4 5h11M4 8h11M4 11h8" stroke="#222" /><circle cx="17" cy="16" r="7.500" fill="#333" stroke="#888" /><text x="14" y="20.500" font-family="Noto Sans" font-size="12" fill="#fff">2</text></svg>
        <i class="edge"></i>
      </div>
    </footer>`;
  }

  render() {
    return html`
      <header class="titlebar">${icon("app")}<h1>广联达BIM钢筋算量软件 <span class="path">GGJ2013 - [C:\\Users\\Administrator.PC-20141127NRHM\\Desktop\\</span>白龙村-2016-08-25-13-27-07(2166版).GGJ12]</h1>
        <div class="wins">
          <button aria-label="最小化"><svg width="10" height="10" viewBox="0 0 10 10"><path d="M0 5.500h10" stroke="#000" /></svg></button>
          <button aria-label="还原"><svg width="10" height="10" viewBox="0 0 10 10"><path d="M.5 2.500h7v7h-7zM2.500 2.500v-2h7v7h-2" fill="none" stroke="#000" /></svg></button>
          <button aria-label="关闭"><svg width="10" height="10" viewBox="0 0 10 10"><path d="M.5.5l9 9M9.500.5l-9 9" stroke="#000" /></svg></button>
        </div>
      </header>
      ${this.toolbars()}
      <div class="main">
        ${this.navPane()}
        <div class="work">
          <div class="row3">
            ${tool({ icon: "create", label: "新建", menu: true })}${tool({ icon: "remove", label: "删除" })}${tool({ icon: "copy", label: "复制" })}${tool({ icon: "rename", label: "重命名" })}
            <i class="sep"></i><label class="label" for="floor">楼层</label>
            <span class="combo floor"><select id="floor"><option>基础层</option></select>${caret()}</span>
            <i class="sep"></i>${tool({ icon: "sort", label: "排序", menu: true })}${tool({ icon: "filter", label: "过滤", menu: true })}
            <i class="sep"></i>${tool({ icon: "copyFrom", label: "从其他楼层复制构件" })}${tool({ icon: "copyTo", label: "复制构件到其他楼层" })}
            <i class="sep wide"></i><button class="tool"><span>查找</span>${caret()}</button>
            <i class="sep"></i>${tool({ icon: "up", label: "上移" })}${tool({ icon: "down", label: "下移" })}
          </div>
          <div class="split">
            <section class="mid">
              <div class="find"><input type="text" aria-label="搜索构件" placeholder="搜索构件..." /><button aria-label="搜索">${icon("search")}</button></div>
              <ul class="tree"><li>
                <div class="branch">${chevron(true)}<i class="dots"></i>${icon("raft")}<span>筏板基础</span></div>
                <ul class="kids">${members.map((m) => html`<li class="kid"><i class="guide"></i><span class=${classMap({ leaf: true, on: m === "FB-10" })}>${icon("gear", 12)}<span>${m}</span></span></li>`)}</ul>
              </li></ul>
            </section>
            <section class="editor">
              <div class="tabs"><button class="tab">属性编辑</button><i class="rest"></i></div>
              <div class="sheet"><div class="grid">
                <table>
                  <thead><tr><th class="c0"></th><th class="c1">属性名称</th><th class="c2 hot">属性值</th><th class="c3">附加</th></tr></thead>
                  <tbody>${props.map((p, i) => this.prop(p, i))}</tbody>
                </table>
                <svg class="mark" width="346" height="96" viewBox="0 0 346 96" aria-hidden="true"><ellipse cx="173" cy="47" rx="168" ry="43" fill="none" stroke="#fe0000" stroke-width="7" /></svg>
              </div></div>
            </section>
          </div>
        </div>
      </div>
      <div class="status"><span></span><span>层高:3.55m</span><span>底标高:-3.58m</span><span>0</span><span>在此设置线性马凳筋的布置方向。</span></div>
      ${this.taskbar()}
      <div class="float">
        <div class="floathead"><span>偏移工具栏</span><button aria-label="关闭"><svg width="9" height="9" viewBox="0 0 9 9"><path d="M1 1l7 7M8 1L1 8" stroke="#fff" stroke-width="1.500" /></svg></button></div>
        <div class="floatbody">
          <span class="combo offset"><select aria-label="偏移方式"><option>不偏移</option></select>${caret()}</span>
          <i class="sep"></i>X=${this.spin("X", "0")}mm&nbsp;&nbsp;Y=${this.spin("Y", "0")}mm&nbsp;<i class="sep"></i>
          <input id="turn" type="checkbox" /><label class="turn" for="turn">旋转</label>${this.spin("角度", "0.000", true)}°
        </div>
      </div>
      <div class="ball"><div class="pct">73%</div><div class="pill">
        <svg width="8" height="26" viewBox="0 0 8 26"><path d="M4 9V2M1 5l3-3.500L7 5" fill="none" stroke="#e8502e" stroke-width="1.800" /><path d="M4 16v7M1 20l3 3.500L7 20" fill="none" stroke="#189848" stroke-width="1.800" /></svg>
        <div class="speed">0K/s<br />0K/s</div>
        <svg width="20" height="24" viewBox="0 0 20 24"><circle cx="9" cy="13" r="8.500" fill="#3f82dc" /><path d="M9 8.500v9M4.500 13h9" stroke="#fff" stroke-width="2" /><circle cx="15" cy="7" r="4" fill="#e03030" stroke="#a81818" /></svg>
      </div></div>
      <div class="ime">
        <svg class="logo" width="28" height="27" viewBox="0 0 28 27"><path d="M0 5l22-4 5 20-21 5z" fill="#f05a22" /><path d="M21 8C15 4 6 7 9 11.500s12 1 11 6-10 4-13.500.500" fill="none" stroke="#fff" stroke-width="3.500" /></svg>
        <button class="mode">中</button>
        <svg width="14" height="16" viewBox="0 0 14 16"><circle cx="4" cy="5" r="2" fill="none" stroke="#1c78c8" stroke-width="1.200" /><path d="M9 9h3v3l-2 2" fill="none" stroke="#1c78c8" stroke-width="2" /></svg>
        <svg width="14" height="16" viewBox="0 0 14 16"><rect x="4" y="0" width="6" height="10" rx="3" fill="#1c78c8" /><path d="M2 6c0 7 10 7 10 0M7 11v4M4 15h6" fill="none" stroke="#1c78c8" stroke-width="1.500" /></svg>
        <svg width="16" height="16" viewBox="0 0 16 16"><rect x=".7" y="2.700" width="14.600" height="10.600" fill="#fff" stroke="#1c78c8" stroke-width="1.400" /><path d="M3 5.500h10M3 8h10" stroke="#1c78c8" stroke-width="1.500" stroke-dasharray="1.500 1" /><path d="M4.500 11h7" stroke="#1c78c8" stroke-width="1.500" /></svg>
        <svg width="16" height="16" viewBox="0 0 16 16"><circle cx="6" cy="4" r="3" fill="#b3bfd0" /><path d="M0 14c0-7 12-7 12 0z" fill="#b3bfd0" /><rect x="6" y="8" width="10" height="8" fill="#fff" /><text x="7" y="15" font-family="Liberation Sans" font-weight="bold" font-size="8" fill="#8fa0b8">16</text></svg>
        <svg width="14" height="16" viewBox="0 0 14 16"><path d="M4 2c1 2 5 2 6 0l4 3-2 3-1.500-1v8h-7V7L2 8 0 5z" fill="#1c78c8" /></svg>
        <svg width="16" height="16" viewBox="0 0 16 16"><path d="M2 14l7-7" stroke="#1c78c8" stroke-width="3" /><path d="M14.500 3.500a4 4 0 1 1-4-2.500L9.500 4l2.500 2z" fill="#1c78c8" /></svg>
      </div>`;
  }
}
